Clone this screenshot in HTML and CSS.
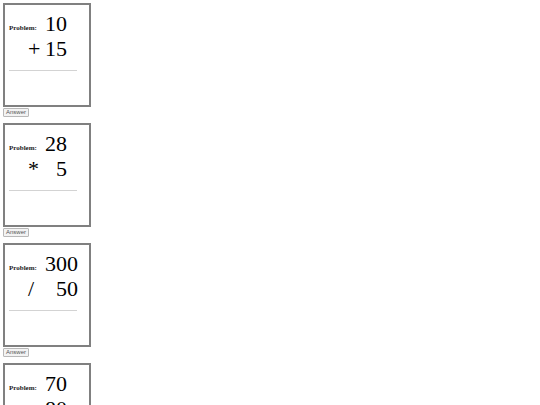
FILE: index.html
```html
<!DOCTYPE html>
<html>
<head>
    <meta charset="UTF-8">
    <title>Flash Cards</title>
    <link rel="stylesheet" href="styles.css">
</head>
<body>
    <div class="deck">
        <div class="item">
            <div class="card">
                <div class="sum">
                    <span class="label">Problem:</span>
                    <span class="top">10</span>
                    <span class="op">+</span>
                    <span class="bottom">15</span>
                </div>
                <div class="rule"></div>
            </div>
            <button class="answer-btn">Answer</button>
        </div>

        <div class="item">
            <div class="card">
                <div class="sum">
                    <span class="label">Problem:</span>
                    <span class="top">28</span>
                    <span class="op">*</span>
                    <span class="bottom">5</span>
                </div>
                <div class="rule"></div>
            </div>
            <button class="answer-btn">Answer</button>
        </div>

        <div class="item">
            <div class="card">
                <div class="sum">
                    <span class="label">Problem:</span>
                    <span class="top">300</span>
                    <span class="op">/</span>
                    <span class="bottom">50</span>
                </div>
                <div class="rule"></div>
            </div>
            <button class="answer-btn">Answer</button>
        </div>

        <div class="item">
            <div class="card">
                <div class="sum">
                    <span class="label">Problem:</span>
                    <span class="top">70</span>
                    <span class="op">-</span>
                    <span class="bottom">80</span>
                </div>
                <div class="rule"></div>
            </div>
            <button class="answer-btn">Answer</button>
        </div>
    </div>
</body>
</html>
```

FILE: styles.css
```css
body {
    margin: 0;
    padding: 3px;
    background: white;
    color: black;
    font-family: 'Liberation Serif', 'Times New Roman', serif;
}

.item {
    margin-bottom: 6px;
}

.card {
    box-sizing: border-box;
    width: 88px;
    height: 104px;
    padding: 4px;
    border: 2px solid #808080;
    background: white;
}

/* label + top number on row one, operator + bottom number on row two */
.sum {
    display: grid;
    grid-template-columns: 19px 17px auto;
    grid-template-rows: 25px 25px;
    justify-content: start;
    align-items: start;
    margin-top: 2px;
    font-size: 22px;
    line-height: 25px;
}

.label {
    grid-column: 1 / 3;
    padding-top: 9px;
    font-size: 7px;
    line-height: 16px;
    font-weight: bold;
    color: #222;
}

.top {
    grid-column: 3;
    justify-self: end;
}

.op {
    grid-column: 2;
}

.bottom {
    grid-column: 3;
    justify-self: end;
}

.rule {
    width: 68px;
    margin-top: 9px;
    border-top: 1px solid #d3d3d3;
}

.answer-btn {
    display: block;
    margin: 1px 0 0 0;
    padding: 0 2px;
    height: 9px;
    font-family: 'Liberation Sans', Arial, sans-serif;
    font-size: 6px;
    line-height: 7px;
    color: #555;
    background: #f3f3f3;
    border: 1px solid #b8b8b8;
    border-radius: 1px;
    cursor: pointer;
}
```
